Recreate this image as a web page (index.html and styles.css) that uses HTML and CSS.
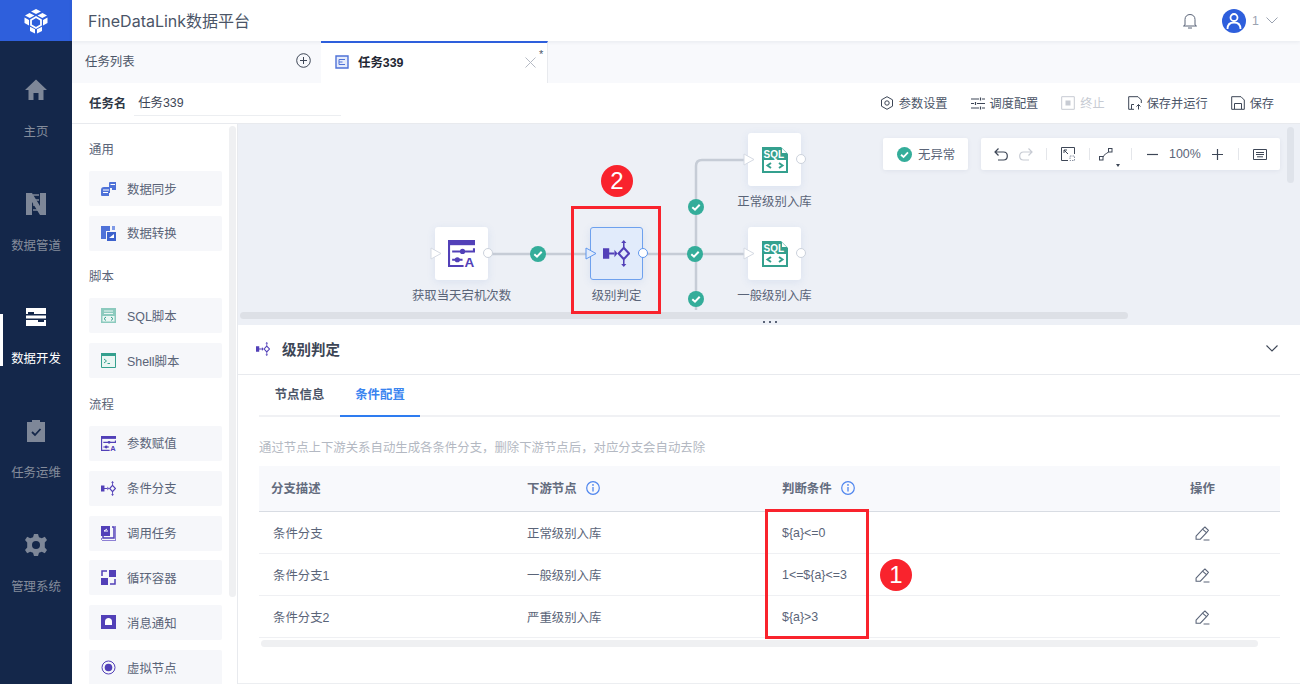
FILE: index.html
```html
<!DOCTYPE html>
<html lang="zh-CN">
<head>
<meta charset="utf-8">
<title>FineDataLink数据平台</title>
<link rel="stylesheet" href="styles.css">
</head>
<body>
<svg class="defs" width="0" height="0">
  <defs>
    <symbol id="sql" viewBox="0 0 26 26">
      <path d="M0 0H19L26 7V26H0Z" fill="#34a08e"/>
      <path d="M2 13H24V24H2Z" fill="#fff"/>
      <path d="M20 1.500V6H24.500Z" fill="#fff"/>
      <text x="1.500" y="10.800" class="sqlt">SQL</text>
      <path d="M9 16 5.500 18.500 9 21M17 16 20.500 18.500 17 21" fill="none" stroke="#34a08e" stroke-width="2"/>
    </symbol>
    <symbol id="param" viewBox="0 0 26 26">
      <path d="M0 0H26V5H0Z" fill="#5240b8"/>
      <path d="M0 0H2V24H15V26H0Z" fill="#5240b8"/>
      <path d="M4 10H24V8H26V12H4ZM4 18H14V20H4Z" fill="#5240b8"/>
      <circle cx="14" cy="11" r="2.500" fill="#5240b8"/><circle cx="9" cy="19" r="2.500" fill="#5240b8"/>
      <text x="16" y="26" class="paramt">A</text>
    </symbol>
    <symbol id="branch" viewBox="0 0 26 26">
      <path d="M0 8H6V12H11V14H6V18H0Z" fill="#5240b8"/>
      <path d="M11 9.500 14 13 11 16.500Z" fill="#5240b8"/>
      <path d="M20 7.500 25 13 20 18.500 15 13Z" fill="none" stroke="#5240b8" stroke-width="2"/>
      <path d="M20 7V2M20 19V24" stroke="#5240b8" stroke-width="1.500"/>
      <path d="M17.500 3 20 0 22.500 3ZM17.500 23 20 26 22.500 23Z" fill="#5240b8"/>
    </symbol>
    <symbol id="check" viewBox="0 0 16 16">
      <circle cx="8" cy="8" r="8" fill="#34ad9a"/>
      <path d="M4.300 8.200 7 10.700 11.700 5.700" fill="none" stroke="#fff" stroke-width="2"/>
    </symbol>
    <symbol id="info" viewBox="0 0 14 14">
      <circle cx="7" cy="7" r="6.300" fill="none" stroke="#4f86ee" stroke-width="1.200"/>
      <path d="M7 6V10.500" stroke="#4f86ee" stroke-width="1.300"/><circle cx="7" cy="3.900" r=".9" fill="#4f86ee"/>
    </symbol>
    <symbol id="edit" viewBox="0 0 14 14">
      <path d="M1 9.500 7.500 2.500 9.300 1 12.500 4 11 6 5 12.300H1Z" fill="none" stroke="#5a6478" stroke-width="1"/>
      <path d="M8 13H13.500M7 3 11 6.500" stroke="#5a6478" stroke-width="1"/>
    </symbol>
    <symbol id="port" viewBox="0 0 12 13">
      <path d="M1 1 11 6.500 1 12Z"/>
    </symbol>
  </defs>
</svg>

<div class="app">
  <nav class="rail">
    <div class="logo">
      <svg width="26" height="26" viewBox="0 0 26 26"><path d="M13 1 18 3.500 13 6 8 3.500ZM6.500 5 11.500 7.500 6.800 10 2 7.500ZM19.500 5 24 7.500 19.300 10 14.500 7.500ZM1.500 9.500 6 12V17.500L1.500 15ZM24.500 9.500V15L20 17.500V12ZM7 18.800 12 21.300V25.500L7 23ZM19 18.800V23L14 25.500V21.300Z" fill="#fff"/><path d="M13 9 18 12V17L13 20 8 17V12Z" fill="none" stroke="#fff" stroke-width="1.800"/></svg>
    </div>
    <ul class="rail-list">
      <li class="rail-item">
        <svg width="24" height="24" viewBox="0 0 24 24"><path d="M12 1.500 1 12H4.500V22H9.500V15H14.500V22H19.500V12H23Z" fill="#7e8798"/></svg>
        <span>主页</span>
      </li>
      <li class="rail-item">
        <svg width="22" height="24" viewBox="0 0 22 24"><path d="M1 1H7L15 14V1H21V23H15L7 10V23H1Z" fill="#7e8798"/><path d="M8 3H14M8 8 14 8M8 13H14M8 18H14" stroke="#7e8798" stroke-width="1.500"/></svg>
        <span>数据管道</span>
      </li>
      <li class="rail-item active">
        <svg width="22" height="20" viewBox="0 0 22 20"><path d="M1 1H21V7H9V5H3V7H1ZM1 13H13V15H19V13H21V19H1ZM1 8.500H21V11.500H1Z" fill="#fff"/></svg>
        <span>数据开发</span>
      </li>
      <li class="rail-item">
        <svg width="20" height="24" viewBox="0 0 20 24"><path d="M1 3H6V1H14V3H19V23H1Z" fill="#7e8798"/><path d="M6 13 9 16 14.500 10" fill="none" stroke="#14274a" stroke-width="1.800"/></svg>
        <span>任务运维</span>
      </li>
      <li class="rail-item">
        <svg width="24" height="24" viewBox="0 0 24 24"><path d="M10 1H14L15 4.200 17.800 5.300 20.800 3.800 23 7 20.800 9.500V14.500L23 17 20.800 20.200 17.800 18.700 15 19.800 14 23H10L9 19.800 6.200 18.700 3.200 20.200 1 17 3.200 14.500V9.500L1 7 3.200 3.800 6.200 5.300 9 4.200Z" fill="#7e8798"/><circle cx="12" cy="12" r="4" fill="#14274a"/></svg>
        <span>管理系统</span>
      </li>
    </ul>
  </nav>

  <div class="main">
    <header class="topbar">
      <h1 class="brand">FineDataLink数据平台</h1>
      <div class="top-right">
        <svg width="14" height="16" viewBox="0 0 14 16"><path d="M2 12V6.500C2 3.500 4 1.500 7 1.500S12 3.500 12 6.500V12L13.500 13H.5ZM5 15H9" fill="none" stroke="#5a6478" stroke-width="1"/></svg>
        <div class="user">
          <span class="avatar"><svg width="16" height="18" viewBox="0 0 16 18"><circle cx="8" cy="5.500" r="3.500" fill="none" stroke="#fff" stroke-width="1.800"/><path d="M1.500 17C1.500 12.500 4 10.500 8 10.500S14.500 12.500 14.500 17" fill="none" stroke="#fff" stroke-width="1.800"/></svg></span>
          <span class="user-num">1</span>
          <svg class="user-caret" width="12" height="7" viewBox="0 0 12 7"><path d="M.5.500 6 6 11.500.500" fill="none" stroke="#9aa2b0" stroke-width="1"/></svg>
        </div>
      </div>
    </header>

    <div class="tabbar">
      <div class="tab-list">
        <span>任务列表</span>
        <svg width="15" height="15" viewBox="0 0 15 15"><circle cx="7.500" cy="7.500" r="6.800" fill="none" stroke="#3d4656" stroke-width="1"/><path d="M7.500 4V11M4 7.500H11" stroke="#3d4656" stroke-width="1"/></svg>
      </div>
      <div class="tab-active">
        <svg width="14" height="14" viewBox="0 0 14 14"><path d="M1 1H13V13H1Z" fill="#e6ecfb" stroke="#4f72d8" stroke-width="1.400"/><path d="M4 4.500H10M4 7H7.500M4 9.500H10M4 4.500V9.500" fill="none" stroke="#4f72d8" stroke-width="1"/></svg>
        <strong>任务339</strong>
        <svg class="tab-close" width="11" height="11" viewBox="0 0 11 11"><path d="M.5.500 10.500 10.500M10.500.500 .5 10.500" stroke="#b5bac4" stroke-width="1"/></svg>
        <i class="tab-star">*</i>
      </div>
    </div>

    <div class="toolbar">
      <div class="name-field">
        <b>任务名</b>
        <span class="name-input">任务339</span>
      </div>
      <div class="actions">
        <span class="action"><svg width="14" height="14" viewBox="0 0 14 14"><path d="M7 .7 12.500 3.800V10.200L7 13.300 1.500 10.200V3.800Z" fill="none" stroke="#3d4656"/><circle cx="7" cy="7" r="2.200" fill="none" stroke="#3d4656"/></svg>参数设置</span>
        <span class="action"><svg width="14" height="13" viewBox="0 0 14 13"><path d="M0 2H8M11 2H14M0 6.500H3M6 6.500H14M0 11H8M11 11H14M9.500 .5V3.500M4.500 5V8M9.500 9.500V12.500" fill="none" stroke="#3d4656" stroke-width="1.200"/></svg>调度配置</span>
        <span class="action off"><svg width="14" height="14" viewBox="0 0 14 14"><path d="M.7.7H13.300V13.300H.7Z" fill="none" stroke="#c7cbd3"/><path d="M4.500 4.500H9.500V9.500H4.500Z" fill="#c7cbd3"/></svg>终止</span>
        <span class="action"><svg width="14" height="14" viewBox="0 0 14 14"><path d="M6 13.300H.7V.7H10L13.300 4V7M3.500 13V8.500H6" fill="none" stroke="#3d4656"/><path d="M10.500 13.500V8.500M8.500 10.500 10.500 8.500 12.500 10.500" fill="none" stroke="#3d4656"/></svg>保存并运行</span>
        <span class="action"><svg width="14" height="14" viewBox="0 0 14 14"><path d="M.7.7H10L13.300 4V13.300H.7ZM3.500 13V7.500H10.500V13" fill="none" stroke="#3d4656"/></svg>保存</span>
      </div>
    </div>

    <div class="workspace">
      <aside class="palette">
        <div class="palette-scroll"></div>
        <h3>通用</h3>
        <div class="pal-item"><svg width="15" height="14" viewBox="0 0 15 14"><path d="M8 1Q8 0 9 0H15V8H11V6H8ZM0 8Q0 5 3 5H9V11H8V14H1Q0 14 0 13Z" fill="#4f72d8"/><path d="M9.500 2.500H14M2 8H8M2 10.500H7" stroke="#fff"/></svg>数据同步</div>
        <div class="pal-item"><svg width="15" height="15" viewBox="0 0 15 15"><path d="M0 0H9V5H5V13H0Z" fill="#4f72d8"/><path d="M6 6H15V15H6Z" fill="#3d62cc"/><path d="M11 0H14V4H11Z" fill="#7f9ae6"/><path d="M8 12 13 8V12Z" fill="#fff"/></svg>数据转换</div>
        <h3>脚本</h3>
        <div class="pal-item"><svg width="15" height="15" viewBox="0 0 15 15"><path d="M0 0H15V15H0Z" fill="#8ccabe"/><path d="M1.500 8H13.500V13.500H1.500Z" fill="#eaf6f3"/><path d="M5 9 3 10.700 5 12.500M10 9 12 10.700 10 12.500" fill="none" stroke="#34a08e"/><path d="M3 3H12M3 5.500H12" stroke="#eaf6f3"/></svg>SQL脚本</div>
        <div class="pal-item"><svg width="15" height="15" viewBox="0 0 15 15"><path d="M.5.500H14.500V14.500H.5Z" fill="#eaf6f3" stroke="#34a08e"/><path d="M0 0H15V3H0Z" fill="#34a08e"/><path d="M3 6 5.500 8 3 10M6.500 10.500H9" fill="none" stroke="#34a08e"/></svg>Shell脚本</div>
        <h3>流程</h3>
        <div class="pal-item"><svg width="15" height="15"><use href="#param"/></svg>参数赋值</div>
        <div class="pal-item"><svg width="15" height="15"><use href="#branch"/></svg>条件分支</div>
        <div class="pal-item"><svg width="15" height="15" viewBox="0 0 15 15"><path d="M0 0H9V10H0Z" fill="#5240b8"/><path d="M11 1H13V12H2V10" fill="none" stroke="#5240b8" stroke-width="1.500"/><path d="M0 12H1V15H15V0H14V14H0Z" fill="#8d80d4"/><path d="M6 3 3 5H7" stroke="#fff" fill="none"/></svg>调用任务</div>
        <div class="pal-item"><svg width="15" height="15" viewBox="0 0 15 15"><path d="M8 0H15V7H8ZM0 8H7V15H0Z" fill="#5240b8"/><path d="M1 6V1H6M9 14H14V9" fill="none" stroke="#5240b8" stroke-width="1.500"/></svg>循环容器</div>
        <div class="pal-item"><svg width="15" height="15" viewBox="0 0 15 15"><path d="M0 0H15V14H0Z" fill="#5240b8"/><path d="M4 10V6.500C4 4.500 5.500 3 7.500 3S11 4.500 11 6.500V10Z" fill="#fff"/></svg>消息通知</div>
        <div class="pal-item"><svg width="15" height="15" viewBox="0 0 15 15"><circle cx="7.500" cy="7.500" r="6.500" fill="none" stroke="#5240b8"/><circle cx="7.500" cy="7.500" r="3.800" fill="#5240b8"/></svg>虚拟节点</div>
      </aside>

      <section class="content">
        <div class="canvas">
          <svg class="links" width="1062" height="201" viewBox="0 0 1062 201">
            <path d="M250 130H510M458 186V42Q458 36 464 36H510" fill="none" stroke="#c6ccd6" stroke-width="2.500"/>
          </svg>
          <svg class="badge b1" width="16" height="16"><use href="#check"/></svg>
          <svg class="badge b2" width="16" height="16"><use href="#check"/></svg>
          <svg class="badge b3" width="16" height="16"><use href="#check"/></svg>
          <svg class="badge b4" width="16" height="16"><use href="#check"/></svg>

          <div class="node n1">
            <div class="node-box"><svg class="port-in" width="12" height="13"><use href="#port"/></svg><svg width="27" height="27"><use href="#param"/></svg><i class="port-out"></i></div>
            <span>获取当天宕机次数</span>
          </div>
          <div class="node n2">
            <div class="node-box selected"><svg class="port-in" width="12" height="13"><use href="#port"/></svg><svg width="27" height="27"><use href="#branch"/></svg><i class="port-out"></i></div>
            <span>级别判定</span>
          </div>
          <div class="node n3">
            <div class="node-box"><svg class="port-in" width="12" height="13"><use href="#port"/></svg><svg width="26" height="26"><use href="#sql"/></svg><i class="port-out"></i></div>
            <span>正常级别入库</span>
          </div>
          <div class="node n4">
            <div class="node-box"><svg class="port-in" width="12" height="13"><use href="#port"/></svg><svg width="26" height="26"><use href="#sql"/></svg><i class="port-out"></i></div>
            <span>一般级别入库</span>
          </div>

          <div class="canvas-tools">
            <div class="status"><svg width="15" height="15"><use href="#check"/></svg>无异常</div>
            <div class="tools">
              <svg width="14" height="13" viewBox="0 0 14 13"><path d="M4.500.5 1 4 4.500 7.500M1 4H9.500C12 4 13.300 5.800 13.300 8S12 12 9.500 12H4" fill="none" stroke="#3d4656" stroke-width="1.200"/></svg>
              <svg width="14" height="13" viewBox="0 0 14 13"><path d="M9.500.5 13 4 9.500 7.500M13 4H4.500C2 4 .7 5.800.7 8S2 12 4.500 12H10" fill="none" stroke="#c7cbd3" stroke-width="1.200"/></svg>
              <i class="sep"></i>
              <svg width="14" height="14" viewBox="0 0 14 14"><path d="M7 13.500H.5V.5H13.500V7" fill="none" stroke="#3d4656"/><path d="M3 3 7 7M3 3H6M3 3V6" fill="none" stroke="#3d4656"/><path d="M9 9H13.500V13.500H9Z" fill="none" stroke="#8b93a3" stroke-dasharray="1.500 1"/></svg>
              <i class="sep"></i>
              <span class="route"><svg width="14" height="13" viewBox="0 0 14 13"><rect x=".5" y="8.500" width="3.500" height="3.500" fill="none" stroke="#3d4656"/><rect x="9.500" y=".5" width="3.500" height="3.500" fill="none" stroke="#3d4656"/><path d="M4 9C5 6.500 7 6 9.500 4" fill="none" stroke="#3d4656"/></svg><i class="caret"></i></span>
              <i class="sep"></i>
              <svg width="11" height="11" viewBox="0 0 11 11"><path d="M0 5.500H11" stroke="#3d4656" stroke-width="1.200"/></svg>
              <span class="zoom-val">100%</span>
              <svg width="11" height="11" viewBox="0 0 11 11"><path d="M0 5.500H11M5.500 0V11" stroke="#3d4656" stroke-width="1.200"/></svg>
              <i class="sep"></i>
              <svg width="14" height="11" viewBox="0 0 14 11"><path d="M.5.500H13.500V10.500H.5ZM3 3.500H11M3 5.500H11M4 7.800H10" fill="none" stroke="#3d4656"/></svg>
            </div>
          </div>
          <div class="vscroll"></div>
          <div class="hscroll"></div>
          <div class="grip"><i></i><i></i><i></i></div>
        </div>

        <div class="detail">
          <div class="detail-head">
            <div class="detail-title"><svg width="14" height="14"><use href="#branch"/></svg><b>级别判定</b></div>
            <svg width="12" height="7" viewBox="0 0 12 7"><path d="M.5.500 6 6 11.500.500" fill="none" stroke="#3d4656" stroke-width="1.100"/></svg>
          </div>
          <div class="detail-body">
            <div class="tabs">
              <span class="dtab">节点信息</span>
              <span class="dtab on">条件配置</span>
            </div>
            <p class="hint">通过节点上下游关系自动生成各条件分支，删除下游节点后，对应分支会自动去除</p>
            <table class="grid">
              <colgroup><col class="c1"><col class="c2"><col class="c3"><col class="c4"></colgroup>
              <thead>
                <tr>
                  <th>分支描述</th>
                  <th><span class="th-in">下游节点<svg width="14" height="14"><use href="#info"/></svg></span></th>
                  <th><span class="th-in">判断条件<svg width="14" height="14"><use href="#info"/></svg></span></th>
                  <th>操作</th>
                </tr>
              </thead>
              <tbody>
                <tr><td>条件分支</td><td>正常级别入库</td><td>${a}&lt;=0</td><td><svg width="15" height="15"><use href="#edit"/></svg></td></tr>
                <tr><td>条件分支1</td><td>一般级别入库</td><td>1&lt;=${a}&lt;=3</td><td><svg width="15" height="15"><use href="#edit"/></svg></td></tr>
                <tr><td>条件分支2</td><td>严重级别入库</td><td>${a}&gt;3</td><td><svg width="15" height="15"><use href="#edit"/></svg></td></tr>
              </tbody>
            </table>
            <div class="table-scroll"></div>
          </div>
        </div>
      </section>
    </div>
  </div>

  <div class="mark mark-box-2"></div>
  <div class="mark mark-num-2">2</div>
  <div class="mark mark-box-1"></div>
  <div class="mark mark-num-1">1</div>
</div>
</body>
</html>
```

FILE: styles.css
```css
* { box-sizing: border-box; }
html, body { margin: 0; height: 100%; overflow: hidden; }
body {
  font-family: "Liberation Sans", "Noto Sans CJK SC", sans-serif;
  font-size: 12.4px;
  color: #4b5567;
  background: #fff;
}
.defs { position: absolute; }
.sqlt { font: 700 10px "Liberation Sans", sans-serif; fill: #fff; }
.paramt { font: 700 13px "Liberation Sans", sans-serif; fill: #5240b8; }

.app { display: flex; width: 1300px; height: 684px; position: relative; overflow: hidden; }

/* rail */
.rail { width: 72px; flex: none; background: #14274a; display: flex; flex-direction: column; }
.logo { height: 41px; background: #2e5fdc; display: flex; align-items: center; justify-content: center; }
.rail-list { list-style: none; margin: 0; padding: 0; }
.rail-item {
  position: relative;
  height: 113.700px;
  padding-top: 37px;
  display: flex;
  flex-direction: column;
  align-items: center;
  color: #848c9b;
}
.rail-item svg { height: 24px; flex: none; }
.rail-item span { margin-top: 21px; line-height: 18px; white-space: nowrap; }
.rail-item.active { color: #fff; }
.rail-item.active::before {
  content: "";
  position: absolute;
  left: 0;
  top: 46px;
  width: 3px;
  height: 52px;
  background: #fff;
}

/* main */
.main { flex: 1; min-width: 0; display: flex; flex-direction: column; }
.topbar {
  height: 41px;
  flex: none;
  display: flex;
  align-items: center;
  justify-content: space-between;
  padding: 0 22px 0 16px;
  background: #fff;
  box-shadow: 0 1px 4px rgba(30, 45, 80, .08);
  position: relative;
}
.brand { margin: 0 0 2px; font: 400 16px "Inter", "Noto Sans CJK SC", sans-serif; color: #4b5567; }
.top-right { display: flex; align-items: center; gap: 25px; }
.user { display: flex; align-items: center; gap: 6px; }
.avatar { width: 24px; height: 24px; border-radius: 50%; background: #2e5fdc; display: flex; align-items: center; justify-content: center; }
.user-num { color: #9aa2b0; }
.user-caret { margin-left: 1px; }

.tabbar { height: 42px; flex: none; display: flex; background: #f8f9fc; }
.tab-list { width: 249px; display: flex; align-items: center; justify-content: space-between; padding: 0 10px 3px 13px; }
.tab-active {
  width: 227px;
  background: #fff;
  border-top: 2px solid #2e5fdc;
  border-right: 1px solid #e8eaee;
  display: flex;
  align-items: center;
  padding: 0 0 2px 14px;
  position: relative;
  color: #1f2733;
}
.tab-active strong { margin-left: 9px; font-weight: 700; }
.tab-close { position: absolute; left: 204px; top: 14px; }
.tab-star { position: absolute; left: 218px; top: 5px; font-style: normal; font-size: 11px; line-height: 12px; color: #4b5567; }

.toolbar { height: 41px; flex: none; display: flex; align-items: center; justify-content: space-between; padding: 0 26px 0 17px; border-bottom: 1px solid #e8eaee; background: #fff; }
.name-field { display: flex; align-items: center; gap: 8px; }
.name-field b { color: #2f3846; font-weight: 700; }
.name-input { width: 207px; height: 25px; line-height: 25px; padding-left: 4px; border-bottom: 1px solid #eceef1; color: #3d4656; }
.actions { display: flex; align-items: center; gap: 23px; }
.action { display: flex; align-items: center; gap: 5px; font-size: 12.200px; color: #4b5567; }
.action.off { color: #c7cbd3; }

.workspace { flex: 1; min-height: 0; display: flex; }

/* palette */
.palette { width: 166px; flex: none; padding: 17px 0 0 17px; position: relative; overflow: hidden; border-right: 1px solid #e8eaee; }
.palette h3 { margin: 0 0 12px; font-size: inherit; font-weight: 400; line-height: 18px; color: #5a6478; }
.pal-item {
  width: 133px;
  height: 35px;
  margin-bottom: 9.900px;
  background: #f6f7fa;
  border-radius: 2px;
  display: flex;
  align-items: center;
  gap: 11px;
  padding-left: 12px;
  color: #5a6478;
}
.pal-item svg { flex: none; }
.pal-item + h3 { margin-top: 17.500px; }
.palette-scroll { position: absolute; left: 157px; top: 2px; width: 7px; height: 471px; border-radius: 4px; background: #eff0f2; }

.content { flex: 1; min-width: 0; display: flex; flex-direction: column; }

/* canvas */
.canvas { height: 201px; flex: none; position: relative; background: #edf0f6; overflow: hidden; }
.links { position: absolute; left: 0; top: 0; }
.badge { position: absolute; }
.b1 { left: 292px; top: 122px; }
.b2 { left: 450px; top: 75px; }
.b3 { left: 449px; top: 122px; }
.b4 { left: 450px; top: 167px; }
.node { position: absolute; width: 119px; display: flex; flex-direction: column; align-items: center; color: #5a6478; }
.node span { margin-top: 7px; line-height: 18px; white-space: nowrap; }
.node-box {
  width: 53px;
  height: 53px;
  position: relative;
  background: #fff;
  border-radius: 3px;
  box-shadow: 0 2px 8px rgba(80, 120, 200, .12);
  display: flex;
  align-items: center;
  justify-content: center;
}
.node-box.selected { background: #e1ebfb; border: 1px solid #6ea1ee; }
.port-in { position: absolute; left: -5px; top: 20px; fill: #fff; stroke: #d5dae3; stroke-width: 1; }
.port-out { position: absolute; right: -5px; top: 21px; width: 10px; height: 10px; border-radius: 50%; background: #fff; border: 1px solid #ccd2dc; }
.selected .port-in { left: -6px; top: 19px; fill: #e1ebfb; stroke: #5e97ee; }
.selected .port-out { right: -6px; border-color: #5e97ee; top: 20px; }
.n1 { left: 164px; top: 103px; }
.n2 { left: 319px; top: 103px; }
.n3 { left: 477px; top: 9px; }
.n4 { left: 477px; top: 103px; }

.canvas-tools { position: absolute; right: 20px; top: 14px; display: flex; gap: 13px; }
.status, .tools { height: 32px; background: #fff; border-radius: 2px; box-shadow: 0 1px 4px rgba(60, 80, 120, .08); display: flex; align-items: center; }
.status { width: 85px; padding-left: 14px; gap: 6px; color: #5a6478; }
.tools { width: 299px; padding-left: 13px; }
.tools > * { flex: none; }
.tools > :nth-child(2) { margin-left: 11px; }
.tools > :nth-child(3) { margin-left: 13px; }
.tools > :nth-child(4) { margin-left: 14px; }
.tools > :nth-child(5) { margin-left: 14px; }
.tools > :nth-child(6) { margin-left: 9px; }
.tools > :nth-child(7) { margin-left: 18px; }
.tools > :nth-child(8) { margin-left: 15px; }
.tools > :nth-child(9) { margin-left: 11px; }
.tools > :nth-child(10) { margin-left: 11px; }
.tools > :nth-child(11) { margin-left: 15px; }
.tools > :nth-child(12) { margin-left: 14px; }
.sep { width: 1px; height: 12px; background: #e4e6ea; }
.route { position: relative; display: flex; }
.caret { position: absolute; left: 17px; top: 16px; border-top: 3px solid #3d4656; border-left: 2px solid transparent; border-right: 2px solid transparent; }
.zoom-val { width: 32px; color: #5a6478; }
.vscroll { position: absolute; right: 6px; top: 3px; width: 7px; height: 56px; border-radius: 4px; background: #dfe3ea; }
.hscroll { position: absolute; left: 2px; bottom: 6px; width: 888px; height: 7px; border-radius: 4px; background: #dde0e6; }
.grip { position: absolute; left: 525px; bottom: 2px; display: flex; gap: 4px; }
.grip i { width: 2px; height: 2px; background: #5a6478; }

/* detail */
.detail { flex: 1; min-height: 0; background: #fff; border-bottom: 1px solid #eceef1; }
.detail-head { height: 50px; display: flex; align-items: center; justify-content: space-between; padding: 0 22px 2px 18px; border-bottom: 1px solid #e8eaee; }
.detail-title { display: flex; align-items: center; gap: 12px; }
.detail-title b { font-size: 14.500px; font-weight: 700; color: #3d4656; }
.detail-body { padding: 0 20px 0 21px; }
.tabs { height: 42px; display: flex; border-bottom: 2px solid #f0f1f4; }
.dtab { width: 81px; height: 42px; line-height: 41px; text-align: center; font-weight: 700; color: #4b5567; }
.dtab.on { width: 80px; color: #3a84f0; border-bottom: 2px solid #2e7cf0; }
.hint { margin: 0; padding-top: 22px; height: 49px; line-height: 18px; color: #b3b8c2; }
.grid { width: 1021px; border-collapse: collapse; table-layout: fixed; }
.c1 { width: 256px; }
.c2 { width: 255px; }
.c3 { width: 408px; }
.c4 { width: 102px; }
.grid th { height: 45px; padding: 0 0 0 12px; background: #f8f9fc; border-bottom: 1px solid #d8dce3; text-align: left; font-weight: 700; color: #636c7e; }
.th-in { display: inline-flex; align-items: center; gap: 9px; }
.grid td { height: 42px; padding: 2px 0 0 12px; border-bottom: 1px solid #eff0f3; color: #5a6478; }
.grid td:first-child { padding-left: 14px; }
.grid td:last-child svg { display: block; margin-left: 5px; }
.table-scroll { margin: 2px 0 0 2px; width: 997px; height: 7px; border-radius: 4px; background: #eff0f2; }

/* annotations */
.mark { position: absolute; }
.mark-box-2 { left: 571px; top: 206px; width: 90px; height: 108px; border: 3px solid #f9232d; }
.mark-box-1 { left: 765px; top: 509px; width: 104px; height: 130px; border: 3px solid #f9232d; }
.mark-num-2, .mark-num-1 {
  border-radius: 50%;
  background: #f9232d;
  color: #fff;
  font: 400 24px/32px "Liberation Sans", sans-serif;
  text-align: center;
}
.mark-num-2 { left: 601px; top: 165px; width: 32px; height: 32px; }
.mark-num-1 { left: 880px; top: 559px; width: 32px; height: 32px; }
```
